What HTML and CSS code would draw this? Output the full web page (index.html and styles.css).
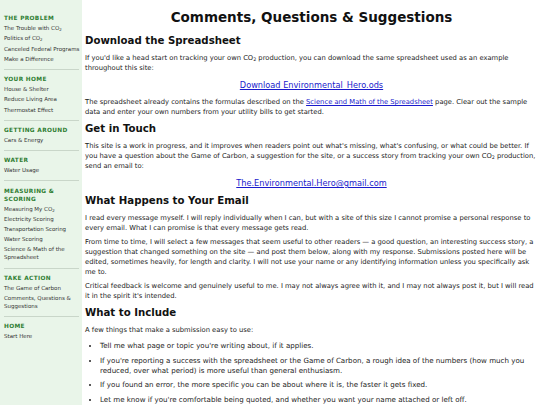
FILE: index.html
```html
<!DOCTYPE html>
<html>
<head>
<meta charset="utf-8">
<link rel="stylesheet" href="styles.css">
</head>
<body>
<div class="page">
  <nav class="sidebar">
    <div class="section">
      <div class="sec-title">The Problem</div>
      <a class="nav-link">The Trouble with CO<sub>2</sub></a>
      <a class="nav-link">Politics of CO<sub>2</sub></a>
      <a class="nav-link">Canceled Federal Programs</a>
      <a class="nav-link">Make a Difference</a>
    </div>
    <div class="section">
      <div class="sec-title">Your Home</div>
      <a class="nav-link">House &amp; Shelter</a>
      <a class="nav-link">Reduce Living Area</a>
      <a class="nav-link">Thermostat Effect</a>
    </div>
    <div class="section">
      <div class="sec-title">Getting Around</div>
      <a class="nav-link">Cars &amp; Energy</a>
    </div>
    <div class="section">
      <div class="sec-title">Water</div>
      <a class="nav-link">Water Usage</a>
    </div>
    <div class="section">
      <div class="sec-title">Measuring &amp; Scoring</div>
      <a class="nav-link">Measuring My CO<sub>2</sub></a>
      <a class="nav-link">Electricity Scoring</a>
      <a class="nav-link">Transportation Scoring</a>
      <a class="nav-link">Water Scoring</a>
      <a class="nav-link">Science &amp; Math of the Spreadsheet</a>
    </div>
    <div class="section">
      <div class="sec-title">Take Action</div>
      <a class="nav-link">The Game of Carbon</a>
      <a class="nav-link">Comments, Questions &amp; Suggestions</a>
    </div>
    <div class="section last">
      <div class="sec-title">Home</div>
      <a class="nav-link">Start Here</a>
    </div>
  </nav>
  <main class="content">
    <h1>Comments, Questions &amp; Suggestions</h1>
    <h2>Download the Spreadsheet</h2>
    <p>If you'd like a head start on tracking your own CO<sub>2</sub> production, you can download the same spreadsheet used as an example throughout this site:</p>
    <p class="center-link"><a href="#">Download Environmental_Hero.ods</a></p>
    <p>The spreadsheet already contains the formulas described on the <a href="#">Science and Math of the Spreadsheet</a> page. Clear out the sample data and enter your own numbers from your utility bills to get started.</p>
    <h2>Get in Touch</h2>
    <p>This site is a work in progress, and it improves when readers point out what's missing, what's confusing, or what could be better. If you have a question about the Game of Carbon, a suggestion for the site, or a success story from tracking your own CO<sub>2</sub> production, send an email to:</p>
    <p class="center-link"><a href="#">The.Environmental.Hero@gmail.com</a></p>
    <h2>What Happens to Your Email</h2>
    <p>I read every message myself. I will reply individually when I can, but with a site of this size I cannot promise a personal response to every email. What I can promise is that every message gets read.</p>
    <p>From time to time, I will select a few messages that seem useful to other readers — a good question, an interesting success story, a suggestion that changed something on the site — and post them below, along with my response. Submissions posted here will be edited, sometimes heavily, for length and clarity. I will not use your name or any identifying information unless you specifically ask me to.</p>
    <p>Critical feedback is welcome and genuinely useful to me. I may not always agree with it, and I may not always post it, but I will read it in the spirit it's intended.</p>
    <h2>What to Include</h2>
    <p>A few things that make a submission easy to use:</p>
    <ul>
      <li>Tell me what page or topic you're writing about, if it applies.</li>
      <li>If you're reporting a success with the spreadsheet or the Game of Carbon, a rough idea of the numbers (how much you reduced, over what period) is more useful than general enthusiasm.</li>
      <li>If you found an error, the more specific you can be about where it is, the faster it gets fixed.</li>
      <li>Let me know if you're comfortable being quoted, and whether you want your name attached or left off.</li>
    </ul>
  </main>
</div>
</body>
</html>
```
FILE: styles.css
```css
html, body {
  margin: 0;
  padding: 0;
  background: #ffffff;
}
body {
  font-family: "DejaVu Sans", Verdana, sans-serif;
  color: #222222;
}
.page {
  display: flex;
  align-items: stretch;
  height: 405px;
  overflow: hidden;
}
.sidebar {
  width: 78px;
  flex: 0 0 78px;
  background: #e9f5e9;
  padding: 13px 0 20px 4px;
}
.section {
  display: flex;
  flex-direction: column;
  padding-bottom: 5px;
  border-bottom: 1px solid #c9d6c9;
  margin-bottom: 4px;
  margin-right: 3px;
}
.section.last {
  border-bottom: none;
}
.sec-title {
  font-size: 5.8px;
  font-weight: bold;
  text-transform: uppercase;
  letter-spacing: 0.35px;
  color: #2f7d32;
  line-height: 8px;
  padding: 1.1px 0;
}
.nav-link {
  font-size: 5.5px;
  color: #333333;
  line-height: 8px;
  padding: 1.1px 0;
  text-decoration: none;
  margin-right: -3px;
}
.nav-link sub, .content sub {
  font-size: 70%;
  line-height: 0;
  vertical-align: -0.25em;
}
.content {
  flex: 1;
  min-width: 0;
  padding: 9px 2px 0 3px;
  font-size: 6.78px;
  line-height: 10px;
}
h1 {
  font-size: 13.5px;
  line-height: 16px;
  text-align: center;
  margin: 0 0 10px 0;
  color: #111111;
}
h2 {
  font-size: 10.2px;
  line-height: 12px;
  margin: 6px 0 6px 0;
  color: #111111;
}
p {
  margin: 0 0 4px 0;
}
a {
  color: #1a1acc;
}
.center-link {
  text-align: center;
  font-size: 8.2px;
  line-height: 12px;
  margin: 6px 0 6px 0;
}
ul {
  margin: 6px 0 0 0;
  padding-left: 15px;
}
li {
  font-size: 7.1px;
  line-height: 10px;
  margin: 0 0 4.5px 0;
}
```
